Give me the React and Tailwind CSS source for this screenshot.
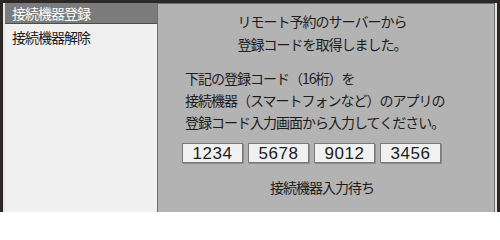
import React from 'react';

const codes = ['1234', '5678', '9012', '3456'];

const App = () => {
  return (
    <div className="w-[500px] h-[212px] overflow-hidden flex bg-[#2d2727] pl-[3px] pr-[3px] pt-[3px] font-['Noto_Sans_CJK_JP','Noto_Sans',sans-serif] text-[#1d1d1d]">
      <div className="flex flex-1 bg-[#e4e4e4] pl-[2px] pr-[2px]">
        {/* Menu list */}
        <div className="w-[152px] flex flex-col bg-[#f0f0f0]">
          <div className="h-[21px] pl-[7px] bg-[#7b7b7b] border-b border-[#4d4d4d] text-white text-[14px] leading-[20px] tracking-[-1px]">
            接続機器登録
          </div>
          <div className="pl-[7px] pt-[1px] text-[14px] leading-[24px] tracking-[-1px]">
            接続機器解除
          </div>
        </div>

        {/* Detail panel */}
        <div className="flex-1 bg-[#b3b3b3] border border-b-0 border-[#6f6f6f]">
          <div className="w-[274px] ml-[27px] pt-[6px] flex flex-col text-[14px] leading-[22px] tracking-[-1px]">
            <p className="text-center">リモート予約のサーバーから</p>
            <p className="text-center mt-[1px]">登録コードを取得しました。</p>
            <p className="mt-[12px]">下記の登録コード（16桁）を</p>
            <p>接続機器（スマートフォンなど）のアプリの</p>
            <p>登録コード入力画面から入力してください。</p>
            <div className="flex gap-[5px] -ml-[3px] mt-[10px]">
              {codes.map((c) => (
                <div
                  key={c}
                  className="w-[61px] h-[20px] flex items-center justify-center bg-[#f1f1f1] border border-[#7a7a7a] shadow-[1px_1px_0_#8c8c8c] font-['Liberation_Sans',sans-serif] text-[17px] leading-none tracking-[0.5px]"
                >
                  {c}
                </div>
              ))}
            </div>
            <p className="text-center mt-[13px]">接続機器入力待ち</p>
          </div>
        </div>
      </div>
    </div>
  );
};

export default App;
